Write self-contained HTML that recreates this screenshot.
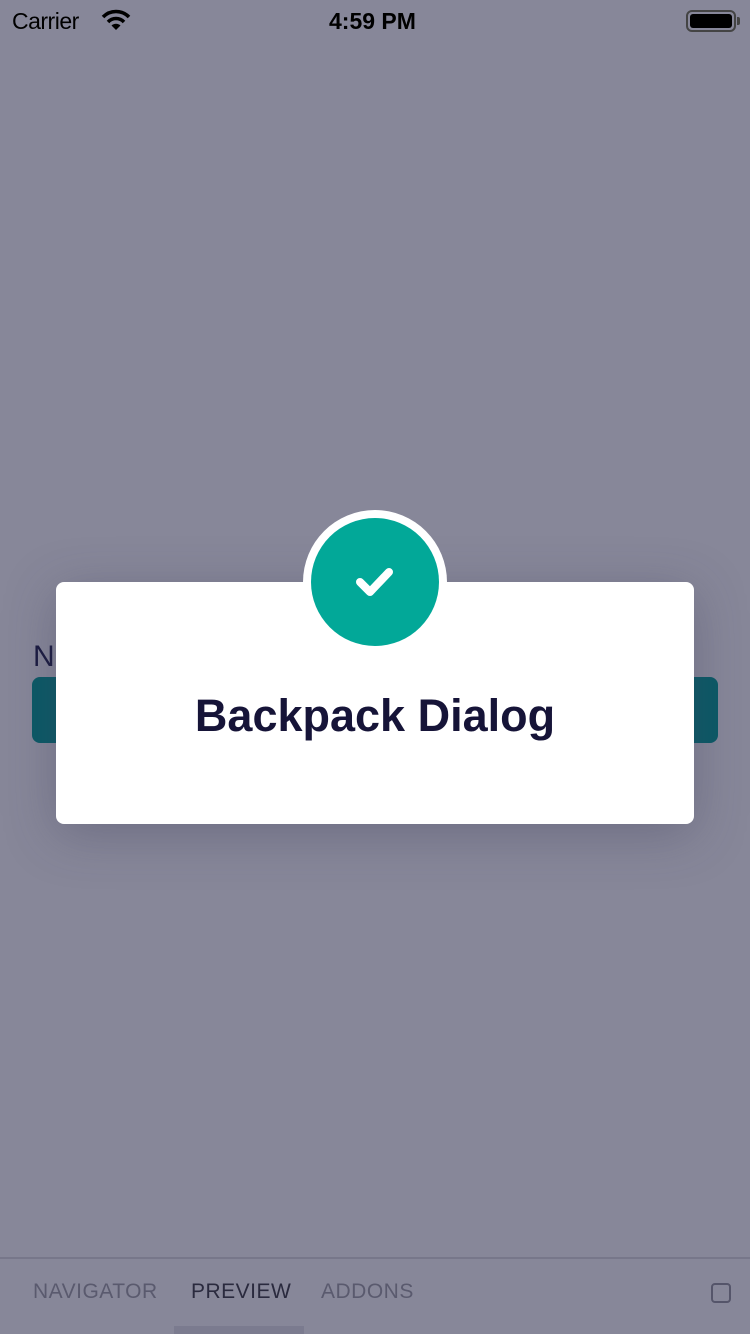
<!DOCTYPE html>
<html><head><meta charset="utf-8"><style>
*{margin:0;padding:0;box-sizing:border-box}
body{width:750px;height:1334px;background:#878799;position:relative;overflow:hidden;font-family:"Liberation Sans",sans-serif}
.sb{position:absolute;top:0;left:0;width:750px;height:40px;font-size:23px;color:#000}
.tab{position:absolute;top:1280px;font-size:21px;color:#5a5a6e;letter-spacing:0.5px}
</style></head><body>
<div class="sb">
<span style="position:absolute;left:12px;top:8px;letter-spacing:-0.5px">Carrier</span>
<svg style="position:absolute;left:101px;top:9px" width="30" height="22" viewBox="0 0 30 22"><path d="M2 8 A18 18 0 0 1 28 8" stroke="#000" stroke-width="3.5" fill="none"/><path d="M7 13 A11 11 0 0 1 23 13" stroke="#000" stroke-width="3.5" fill="none"/><path d="M15 21 L10.5 16.5 A6.5 6.5 0 0 1 19.5 16.5 Z" fill="#000"/></svg>
<span style="position:absolute;left:329px;top:8px;font-weight:bold">4:59 PM</span>
<div style="position:absolute;left:686px;top:10px;width:50px;height:22px;border:2px solid #444;border-radius:6px;padding:2px"><div style="width:100%;height:100%;background:#000;border-radius:3px"></div></div>
<div style="position:absolute;left:737px;top:17px;width:3px;height:8px;background:#444;border-radius:0 2px 2px 0"></div>
</div>
<div style="position:absolute;left:33px;top:640px;font-size:30px;color:#1a1a40">N</div>
<div style="position:absolute;left:32px;top:677px;width:686px;height:66px;background:#0b5a66;border-radius:8px"></div>
<div style="position:absolute;left:56px;top:582px;width:638px;height:242px;background:#fff;border-radius:8px;box-shadow:0 10px 50px rgba(60,60,90,0.35)"></div>
<div style="position:absolute;left:303px;top:510px;width:144px;height:144px;border-radius:50%;background:#fff"></div>
<div style="position:absolute;left:311px;top:518px;width:128px;height:128px;border-radius:50%;background:#02a898"></div>
<svg style="position:absolute;left:354px;top:564px" width="42" height="36" viewBox="0 0 42 36"><path d="M6 18 L16 28 L35 8" stroke="#fff" stroke-width="8" fill="none" stroke-linecap="round" stroke-linejoin="round"/></svg>
<div style="position:absolute;left:56px;width:638px;top:690px;text-align:center;font-size:45px;font-weight:bold;color:#161438">Backpack Dialog</div>
<div style="position:absolute;left:0;top:1257px;width:750px;height:2px;background:#77778a"></div>
<div class="tab" style="left:33px">NAVIGATOR</div>
<div class="tab" style="left:191px;color:#2a2a3e">PREVIEW</div>
<div class="tab" style="left:321px">ADDONS</div>
<div style="position:absolute;left:174px;top:1326px;width:130px;height:8px;background:#7b7b8f"></div>
<div style="position:absolute;left:711px;top:1283px;width:20px;height:20px;border:2px solid #55556a;border-radius:4px"></div>
</body></html>
